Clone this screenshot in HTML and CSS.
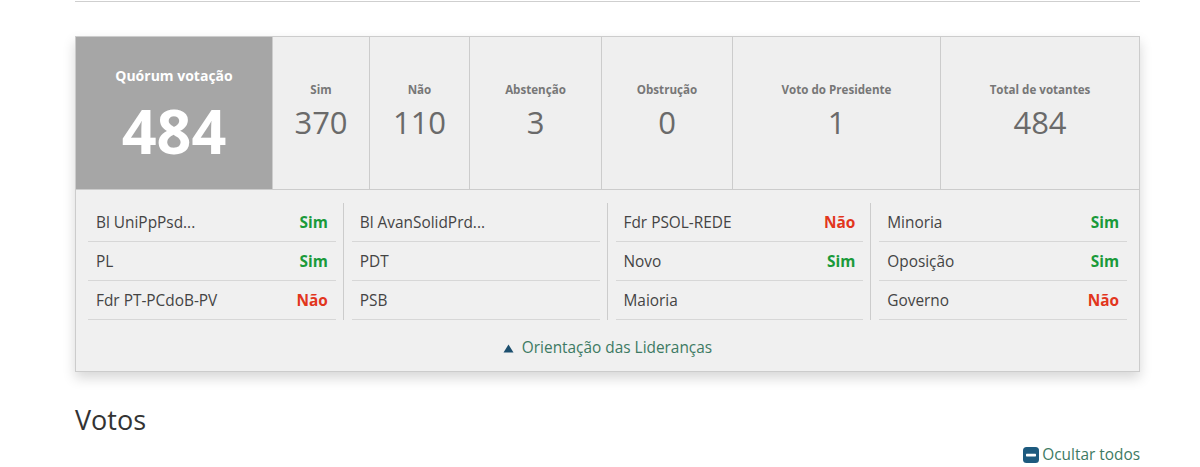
FILE: index.html
```html
<!DOCTYPE html>
<html lang="pt-BR">
<head>
<meta charset="utf-8">
<title>Votação</title>
<link rel="stylesheet" href="styles.css">
</head>
<body>
<div class="page">
  <div class="top-rule"></div>

  <section class="panel">
    <div class="stats">
      <div class="stat stat-quorum">
        <div class="quorum-label">Quórum votação</div>
        <div class="quorum-value">484</div>
      </div>
      <div class="stat">
        <div class="stat-label">Sim</div>
        <div class="stat-value">370</div>
      </div>
      <div class="stat">
        <div class="stat-label">Não</div>
        <div class="stat-value">110</div>
      </div>
      <div class="stat">
        <div class="stat-label">Abstenção</div>
        <div class="stat-value">3</div>
      </div>
      <div class="stat">
        <div class="stat-label">Obstrução</div>
        <div class="stat-value">0</div>
      </div>
      <div class="stat">
        <div class="stat-label">Voto do Presidente</div>
        <div class="stat-value">1</div>
      </div>
      <div class="stat">
        <div class="stat-label">Total de votantes</div>
        <div class="stat-value">484</div>
      </div>
    </div>

    <div class="orient">
      <div class="orient-cols">
        <ul class="orient-col">
          <li class="orient-row"><span class="party">Bl UniPpPsd...</span><span class="vote vote-sim">Sim</span></li>
          <li class="orient-row"><span class="party">PL</span><span class="vote vote-sim">Sim</span></li>
          <li class="orient-row"><span class="party">Fdr PT-PCdoB-PV</span><span class="vote vote-nao">Não</span></li>
        </ul>
        <ul class="orient-col">
          <li class="orient-row"><span class="party">Bl AvanSolidPrd...</span><span class="vote"></span></li>
          <li class="orient-row"><span class="party">PDT</span><span class="vote"></span></li>
          <li class="orient-row"><span class="party">PSB</span><span class="vote"></span></li>
        </ul>
        <ul class="orient-col">
          <li class="orient-row"><span class="party">Fdr PSOL-REDE</span><span class="vote vote-nao">Não</span></li>
          <li class="orient-row"><span class="party">Novo</span><span class="vote vote-sim">Sim</span></li>
          <li class="orient-row"><span class="party">Maioria</span><span class="vote"></span></li>
        </ul>
        <ul class="orient-col">
          <li class="orient-row"><span class="party">Minoria</span><span class="vote vote-sim">Sim</span></li>
          <li class="orient-row"><span class="party">Oposição</span><span class="vote vote-sim">Sim</span></li>
          <li class="orient-row"><span class="party">Governo</span><span class="vote vote-nao">Não</span></li>
        </ul>
      </div>
      <div class="orient-toggle">
        <svg class="toggle-arrow" width="11" height="9" viewBox="0 0 11 9" aria-hidden="true"><path d="M5.5 0.5 L10.5 8.5 L0.5 8.5 Z" fill="#1c4f6e"/></svg>
        <span>Orientação das Lideranças</span>
      </div>
    </div>
  </section>

  <h2 class="votes-title">Votos</h2>

  <div class="votes-actions">
    <span class="hide-all">
      <svg class="hide-icon" width="16" height="16" viewBox="0 0 16 16" aria-hidden="true"><rect x="0" y="0" width="16" height="16" rx="3.5" fill="#1d5a7e"/><rect x="3" y="6.8" width="10" height="2.6" rx="0.6" fill="#ffffff"/></svg>
      <span>Ocultar todos</span>
    </span>
  </div>
</div>
</body>
</html>
```

FILE: styles.css
```css
* { box-sizing: border-box; }

html, body {
  margin: 0;
  padding: 0;
  background: #ffffff;
}

body {
  font-family: "Open Sans", "Noto Sans", "Liberation Sans", sans-serif;
  color: #444444;
}

.page {
  width: 1065px;
  margin-left: 75px;
}

.top-rule {
  height: 1px;
  margin-top: 1px;
  background: #cfcfcf;
}

.panel {
  margin-top: 34px;
  border: 1px solid #cccccc;
  background: #f0f0f0;
  box-shadow: 0 6px 12px rgba(0, 0, 0, 0.16);
}

.stats {
  display: grid;
  grid-template-columns: 196px 97px 100px 132px 131px 208px 1fr;
  height: 153px;
  border-bottom: 1px solid #cccccc;
}

.stat {
  border-left: 1px solid #cccccc;
  text-align: center;
  padding-top: 44px;
  background: #efefef;
}

.stat-quorum {
  border-left: none;
  background: #a6a6a6;
  padding-top: 29px;
}

.quorum-label {
  font-size: 14px;
  line-height: 19px;
  font-weight: 700;
  color: #ffffff;
}

.quorum-value {
  margin-top: 14px;
  font-size: 61px;
  line-height: 64px;
  font-weight: 700;
  color: #ffffff;
}

.stat-label {
  font-size: 11.6px;
  line-height: 17px;
  font-weight: 700;
  color: #777777;
}

.stat-value {
  margin-top: 6px;
  font-size: 31px;
  line-height: 36px;
  font-weight: 400;
  color: #6a6a6a;
}

.orient {
  padding: 13px 12px 13px 12px;
}

.orient-cols {
  display: flex;
}

.orient-col {
  list-style: none;
  margin: 0;
  padding: 0;
  flex: 1 1 0;
}

.orient-col + .orient-col {
  margin-left: 8px;
}

.orient-col:not(:last-child) {
  padding-right: 7px;
  border-right: 1px solid #cccccc;
}

.orient-row {
  display: flex;
  justify-content: space-between;
  align-items: center;
  height: 39px;
  padding: 2px 8px 0 8px;
  border-bottom: 1px solid #d7d7d7;
  font-size: 15.4px;
  line-height: 20px;
}

.party {
  color: #444444;
}

.vote {
  font-weight: 700;
}

.vote-sim { color: #1a9a3a; }
.vote-nao { color: #e2361d; }

.orient-toggle {
  margin-top: 18px;
  display: flex;
  justify-content: center;
  align-items: center;
  gap: 8px;
  font-size: 15.4px;
  line-height: 20px;
  color: #3d7a63;
}

.toggle-arrow {
  display: block;
  margin-top: 1px;
}

.votes-title {
  margin: 31px 0 0 0;
  font-size: 27px;
  line-height: 34px;
  font-weight: 400;
  color: #333333;
}

.votes-actions {
  display: flex;
  justify-content: flex-end;
  margin-top: 7px;
}

.hide-all {
  display: inline-flex;
  align-items: center;
  gap: 3px;
  font-size: 15.4px;
  line-height: 22px;
  color: #3d7a63;
}

.hide-icon {
  display: block;
}
```
